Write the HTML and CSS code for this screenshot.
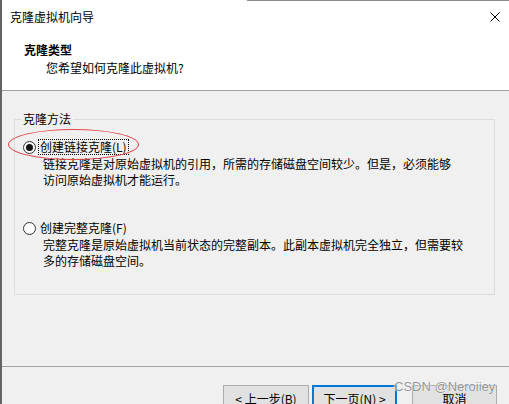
FILE: index.html
```html
<!DOCTYPE html>
<html lang="zh-CN">
<head>
<meta charset="utf-8">
<title>克隆虚拟机向导</title>
<link rel="stylesheet" href="styles.css">
</head>
<body>
<div class="window">
  <div class="header">
    <div class="title-row">
      <span class="title">克隆虚拟机向导</span>
      <svg class="close" width="10" height="10" viewBox="0 0 10 10"><path d="M0.5 0.5 L9.5 9.5 M9.5 0.5 L0.5 9.5" stroke="#000" stroke-width="1" fill="none"/></svg>
    </div>
    <div class="heading">克隆类型</div>
    <div class="sub">您希望如何克隆此虚拟机?</div>
  </div>
  <div class="main">
    <fieldset class="group">
      <legend class="legend">克隆方法</legend>
      <div class="option first">
        <div class="opt-row">
          <span class="radio checked"><span class="dot"></span></span>
          <span class="label focus">创建链接克隆(L)</span>
        </div>
        <div class="desc">链接克隆是对原始虚拟机的引用，所需的存储磁盘空间较少。但是，必须能够<br>访问原始虚拟机才能运行。</div>
      </div>
      <div class="option second">
        <div class="opt-row">
          <span class="radio"></span>
          <span class="label">创建完整克隆(F)</span>
        </div>
        <div class="desc">完整克隆是原始虚拟机当前状态的完整副本。此副本虚拟机完全独立，但需要较<br>多的存储磁盘空间。</div>
      </div>
    </fieldset>
  </div>
  <div class="footer">
    <button class="btn btn-back">&lt; 上一步(B)</button>
    <button class="btn btn-next">下一页(N) &gt;</button>
    <button class="btn btn-cancel">取消</button>
  </div>
  <div class="annot"></div>
  <div class="watermark">CSDN @Neroiiey</div>
</div>
</body>
</html>
```
FILE: styles.css
```css
html, body {
  margin: 0;
  padding: 0;
}
body {
  width: 509px;
  height: 404px;
  overflow: hidden;
  background: #f0f0f0;
  font-family: "Microsoft YaHei", "Noto Sans CJK SC", sans-serif;
  font-size: 12px;
  color: #000;
}
.window {
  position: relative;
  height: 404px;
  box-sizing: border-box;
  border-left: 2px solid #646464;
  display: flex;
  flex-direction: column;
}
.header {
  height: 91px;
  box-sizing: border-box;
  background: linear-gradient(#8c8c8c, #8c8c8c) no-repeat right top / 262px 1px, #fff;
  border-bottom: 1px solid #a0a0a0;
  padding: 9px 0 0 8px;
  line-height: 16px;
}
.title-row {
  display: flex;
  justify-content: space-between;
  align-items: flex-start;
}
.close {
  margin-top: 3px;
  margin-right: 9px;
}
.heading {
  margin-top: 17px;
  padding-left: 14px;
  font-weight: bold;
}
.sub {
  margin-top: 2px;
  padding-left: 36px;
}
.main {
  padding: 0 14px 0 12px;
}
.group {
  margin: 21px 0 0 0;
  padding: 0 0 25px 0;
  border: 1px solid #dcdcdc;
  min-width: 0;
}
.legend {
  margin-left: 6px;
  padding: 0 2px;
  line-height: 14px;
}
.option.first {
  margin-top: 13px;
}
.option.second {
  margin-top: 32px;
}
.opt-row {
  display: flex;
  align-items: center;
  gap: 2px;
  padding-left: 8px;
}
.radio {
  width: 13px;
  height: 13px;
  box-sizing: border-box;
  border: 1px solid #333;
  border-radius: 50%;
  background: #fff;
  display: grid;
  place-items: center;
}
.dot {
  width: 7px;
  height: 7px;
  border-radius: 50%;
  background: #111;
}
.label {
  line-height: 14px;
  padding: 0 1px;
  border: 1px solid transparent;
}
.label.focus {
  border: 1px dotted #000;
}
.desc {
  padding-left: 28px;
  margin-top: 1px;
  line-height: 16px;
}
.footer {
  margin-top: auto;
  height: 38px;
  box-sizing: border-box;
  border-top: 1px solid #a0a0a0;
  padding: 18px 12px 0 0;
  display: flex;
  justify-content: flex-end;
  align-items: flex-start;
}
.btn {
  height: 24px;
  box-sizing: border-box;
  margin: 0;
  border: 1px solid #adadad;
  background: #e1e1e1;
  font-family: "Microsoft YaHei", "Noto Sans CJK SC", sans-serif;
  font-size: 12px;
  line-height: 16px;
  padding: 4px 0 0 0;
  color: #000;
  text-align: center;
  flex: none;
}
.btn-back {
  width: 86px;
}
.btn-next {
  width: 85px;
  margin-left: 3px;
  border: 2px solid #0078d7;
  padding-top: 3px;
}
.btn-cancel {
  width: 85px;
  margin-left: 15px;
}
.annot {
  position: absolute;
  left: 6px;
  top: 129px;
  width: 131px;
  height: 31px;
  box-sizing: border-box;
  border: 1px solid #e5484a;
  border-radius: 50%;
}
.watermark {
  position: absolute;
  left: 392px;
  top: 379px;
  font-family: "Liberation Sans", Arial, sans-serif;
  font-size: 13px;
  line-height: 16px;
  color: rgba(110, 110, 110, 0.75);
  text-shadow: 0 0 1px #fff, 0 0 1px #fff;
  white-space: nowrap;
}
```
